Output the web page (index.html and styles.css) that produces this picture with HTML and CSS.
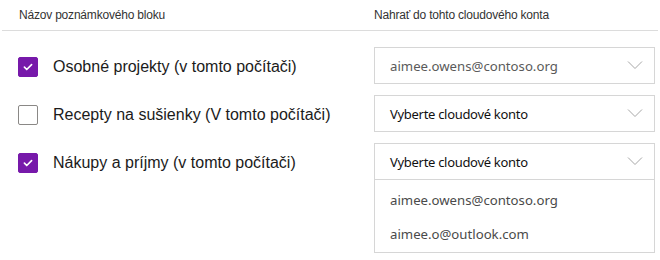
FILE: index.html
```html
<!DOCTYPE html>
<html lang="sk">
<head>
    <meta charset="UTF-8">
    <title>Nahrať poznámkové bloky</title>
    <link rel="stylesheet" href="styles.css">
</head>
<body>
    <div class="head">
        <div class="head-name">Názov poznámkového bloku</div>
        <div class="head-account">Nahrať do tohto cloudového konta</div>
    </div>

    <div class="rows">
        <div class="row">
            <label class="book"><span class="check on"><svg viewBox="0 0 20 20"><path d="M6 10.2l2.6 2.6L14 7.4"/></svg></span>Osobné projekty (v tomto počítači)</label>
            <div class="select"><span class="value muted">aimee.owens@contoso.org</span><svg class="chev" viewBox="0 0 16 8"><path d="M1 0.5l7 7 7-7"/></svg></div>
        </div>
        <div class="row">
            <label class="book"><span class="check"></span>Recepty na sušienky (V tomto počítači)</label>
            <div class="select"><span class="value">Vyberte cloudové konto</span><svg class="chev" viewBox="0 0 16 8"><path d="M1 0.5l7 7 7-7"/></svg></div>
        </div>
        <div class="row">
            <label class="book"><span class="check on"><svg viewBox="0 0 20 20"><path d="M6 10.2l2.6 2.6L14 7.4"/></svg></span>Nákupy a príjmy (v tomto počítači)</label>
            <div class="picker">
                <div class="select"><span class="value">Vyberte cloudové konto</span><svg class="chev" viewBox="0 0 16 8"><path d="M1 0.5l7 7 7-7"/></svg></div>
                <ul class="menu">
                    <li>aimee.owens@contoso.org</li>
                    <li>aimee.o@outlook.com</li>
                </ul>
            </div>
        </div>
    </div>
</body>
</html>
```
FILE: styles.css
```css
body { margin: 0; background: #ffffff; font-family: "Liberation Sans", Arial, sans-serif; color: #222; }

.head { display: grid; grid-template-columns: 372px 1fr; height: 30px; align-items: center; margin: 0 2px; border-bottom: 1px solid #dcdcdc; font-size: 12px; color: #333; letter-spacing: -0.2px; }
.head-name { padding-left: 17px; }

.rows { display: flex; flex-direction: column; gap: 11px; padding-top: 16px; }
.row { display: grid; grid-template-columns: 374px 281px; align-items: start; }

.book { display: flex; align-items: center; gap: 15px; box-sizing: border-box; height: 37px; padding: 3px 0 0 18px; font-size: 16px; color: #1b1b1b; }
.check { width: 18px; height: 18px; border: 1px solid #8a8886; border-radius: 2px; box-sizing: content-box; display: flex; }
.check.on { background: #7719aa; border-color: #7719aa; }
.check svg { width: 18px; height: 18px; fill: none; stroke: #ffffff; stroke-width: 1.8; stroke-linecap: round; stroke-linejoin: round; }

.select { box-sizing: border-box; height: 37px; border: 1px solid #d6d6d6; display: flex; align-items: center; justify-content: space-between; padding: 0 11px 0 15px; font-family: "Noto Sans", sans-serif; font-size: 13px; color: #111; }
.select .value { letter-spacing: -0.3px; }
.select .value.muted { color: #5a5a5a; font-size: 13.2px; letter-spacing: 0; }
.chev { width: 16px; height: 8px; fill: none; stroke: #a6a6a6; stroke-width: 1; margin-top: -2px; }

.picker { display: flex; flex-direction: column; }
.menu { margin: -1px 0 0; padding: 3px 0 1px; list-style: none; border: 1px solid #d6d6d6; font-family: "Noto Sans", sans-serif; }
.menu li { height: 34px; line-height: 34px; padding-left: 15px; font-size: 13.2px; color: #4a4a4a; }
```
